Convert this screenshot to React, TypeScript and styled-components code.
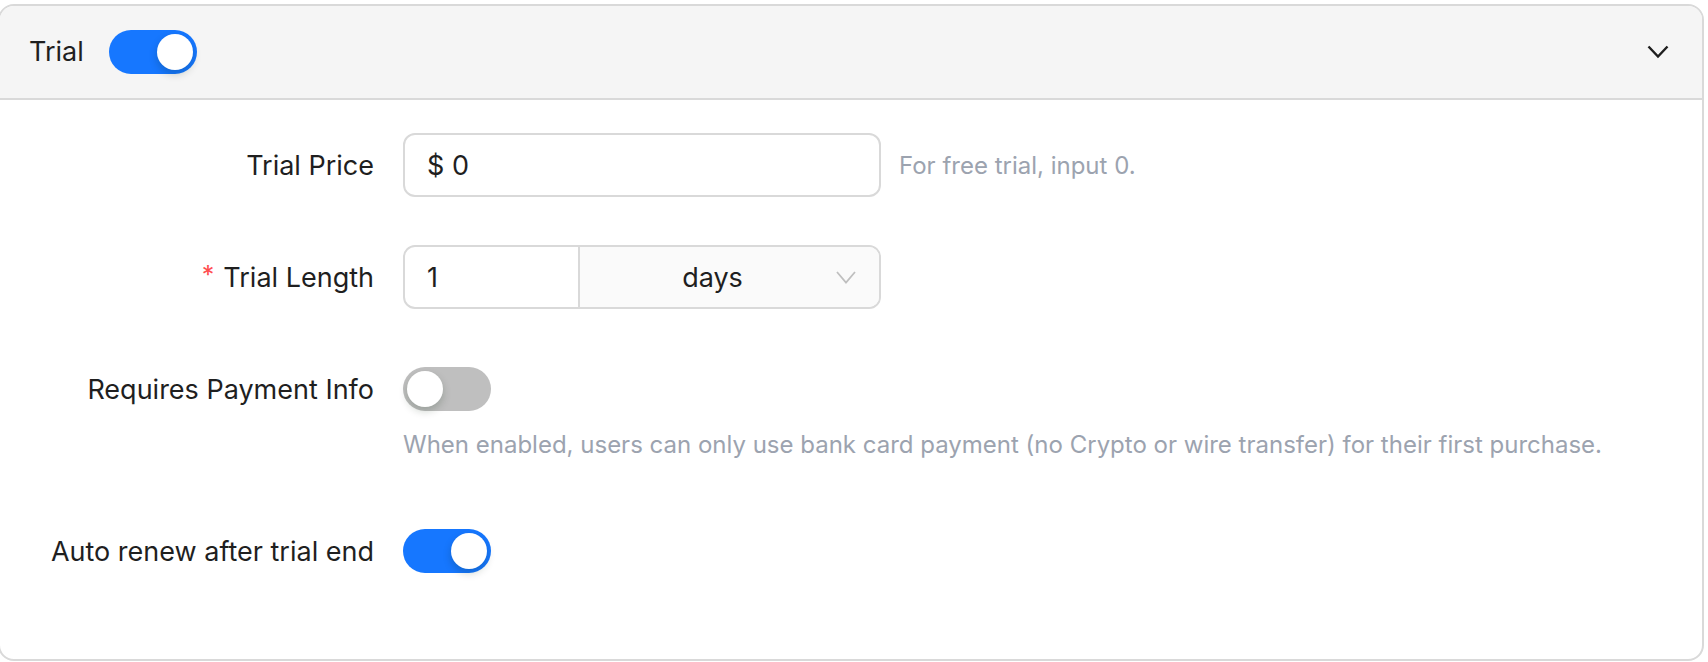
import React from 'react';
import styled, {createGlobalStyle} from 'styled-components';

const GlobalStyle = createGlobalStyle`
  body {
    margin: 0;
    background: #fff;
    font-family: Inter, "Noto Sans", "Liberation Sans", sans-serif;
    color: #1f1f1f;
  }
`;

const Page = styled.div`
  padding-top: 4px;
  margin-left: -2px;
  width: 1706px;
`;

const Card = styled.div`
  border: 2px solid #d9d9d9;
  border-radius: 16px;
  overflow: hidden;
  background: #fff;
`;

const Header = styled.div`
  display: flex;
  align-items: center;
  height: 92px;
  padding: 0 33px 0 29px;
  background: #f5f5f5;
  border-bottom: 2px solid #d9d9d9;
`;

const Title = styled.span`
  font-size: 27px;
  margin-right: 25px;
  margin-top: -2px;
`;

const Chevron = styled.svg`
  margin-left: auto;
  display: block;
`;

const Body = styled.div`
  padding: 33px 32px 28px;
`;

const Row = styled.div<{$last?: boolean}>`
  display: grid;
  grid-template-columns: 371px 1fr;
  margin-bottom: ${p => (p.$last ? '0' : '48px')};
`;

const Label = styled.div`
  height: 64px;
  display: flex;
  align-items: center;
  justify-content: flex-end;
  padding-right: 29px;
  font-size: 27px;
  white-space: nowrap;
`;

const Required = styled.span`
  color: #ff4d4f;
  font-size: 25px;
  margin-right: 9px;
  margin-top: -4px;
`;

const Control = styled.div`
  display: flex;
  flex-direction: column;
`;

const ControlLine = styled.div`
  height: 64px;
  display: flex;
  align-items: center;
`;

const TextInput = styled.div`
  box-sizing: border-box;
  width: 478px;
  height: 64px;
  border: 2px solid #d9d9d9;
  border-radius: 12px;
  padding: 0 22px;
  display: flex;
  align-items: center;
  font-size: 27px;
`;

const Help = styled.span`
  font-size: 24px;
  color: #9ca3af;
  white-space: nowrap;
`;

const InlineHelp = styled(Help)`
  margin-left: 18px;
`;

const Extra = styled(Help)`
  line-height: 44px;
  padding: 2px 0 4px;
`;

const Group = styled.div`
  box-sizing: border-box;
  width: 478px;
  height: 64px;
  border: 2px solid #d9d9d9;
  border-radius: 12px;
  overflow: hidden;
  display: flex;
  font-size: 27px;
`;

const NumberPart = styled.div`
  width: 173px;
  padding: 0 22px;
  display: flex;
  align-items: center;
  box-sizing: border-box;
`;

const SelectPart = styled.div`
  flex: 1;
  border-left: 2px solid #d9d9d9;
  background: #fafafa;
  display: flex;
  align-items: center;
  padding: 0 23px 0 22px;
`;

const SelectValue = styled.span`
  flex: 1;
  text-align: center;
  padding-right: 13px;
`;

const Track = styled.div<{$on: boolean}>`
  box-sizing: border-box;
  width: 88px;
  height: 44px;
  border-radius: 22px;
  padding: 4px;
  background: ${p => (p.$on ? '#1677ff' : '#bfbfbf')};
  display: flex;
  justify-content: ${p => (p.$on ? 'flex-end' : 'flex-start')};
`;

const Knob = styled.div`
  width: 36px;
  height: 36px;
  border-radius: 50%;
  background: #fff;
  box-shadow: 0 4px 8px rgba(0, 35, 11, 0.2);
`;

const Spacer = styled.div`
  height: 48px;
`;

function Switch({on}: {on: boolean}) {
	return <Track $on={on}><Knob/></Track>;
}

function App() {
	return (
		<Page>
			<GlobalStyle/>
			<Card>
				<Header>
					<Title>Trial</Title>
					<Switch on/>
					<Chevron width="22" height="14" viewBox="0 0 22 14">
						<polyline points="1.5,1.5 11,11.5 20.5,1.5" fill="none" stroke="#1f1f1f" strokeWidth="2.4"/>
					</Chevron>
				</Header>
				<Body>
					<Row>
						<Label>Trial Price</Label>
						<Control>
							<ControlLine>
								<TextInput>$ 0</TextInput>
								<InlineHelp>For free trial, input 0.</InlineHelp>
							</ControlLine>
						</Control>
					</Row>
					<Row>
						<Label><Required>*</Required>Trial Length</Label>
						<Control>
							<ControlLine>
								<Group>
									<NumberPart>1</NumberPart>
									<SelectPart>
										<SelectValue>days</SelectValue>
										<svg width="20" height="13" viewBox="0 0 20 13">
											<polyline points="1,1 10,11.5 19,1" fill="none" stroke="#bfbfbf" strokeWidth="1.8"/>
										</svg>
									</SelectPart>
								</Group>
							</ControlLine>
						</Control>
					</Row>
					<Row>
						<Label>Requires Payment Info</Label>
						<Control>
							<ControlLine><Switch on={false}/></ControlLine>
							<Extra>When enabled, users can only use bank card payment (no Crypto or wire transfer) for their first purchase.</Extra>
						</Control>
					</Row>
					<Row $last>
						<Label>Auto renew after trial end</Label>
						<Control>
							<ControlLine><Switch on/></ControlLine>
						</Control>
					</Row>
					<Spacer/>
				</Body>
			</Card>
		</Page>
	);
}

export default App;
